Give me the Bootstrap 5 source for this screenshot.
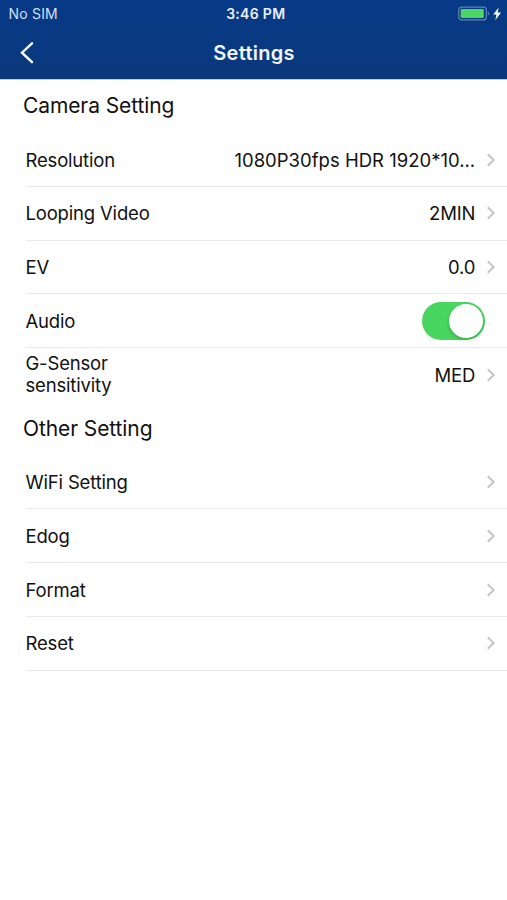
<!DOCTYPE html>
<html lang="en">
<head>
<meta charset="utf-8">
<meta name="viewport" content="width=device-width, initial-scale=1">
<title>Settings</title>
<link href="https://cdn.jsdelivr.net/npm/bootstrap@5.3.0/dist/css/bootstrap.min.css" rel="stylesheet">
<style>
body { font-family: Inter, "Liberation Sans", sans-serif; font-size: 18.5px; line-height: 22px; color: #111; background: #fff; letter-spacing: -.1px; }
.app-header { height: 79px; margin-bottom: .4px; background: linear-gradient(#063a87, #0a387b); box-shadow: 0 1px 0 #b9cfec; color: #fff; }
.status-bar { height: 27px; font-size: 14px; padding: 0 4px 0 8.5px; }
.status-side { flex: 1 1 0; }
.carrier { color: #d3dff3; letter-spacing: .2px; }
.clock { font-weight: 600; color: #e9f0fb; letter-spacing: .3px; }
.title-bar { height: 51px; padding: 0 19px 0 20px; }
.page-title { font-size: 20px; line-height: 24px; font-weight: 600; color: #f2f6fc; letter-spacing: .25px; }
.section-title { height: 53.75px; padding-left: 23px; font-size: 21px; line-height: 26px; font-weight: 400; }
.setting-row { height: 53.75px; margin-left: 25.5px; padding-right: 11px; border-bottom: 1px solid #e9e9eb; }
.setting-row.plain { border-bottom-color: transparent; }
.setting-label { width: 140px; letter-spacing: -.18px; }
.setting-label.narrow { width: 100px; padding-bottom: 1px; }
.setting-value { width: 243px; margin-right: -1.2px; letter-spacing: .01px; font-feature-settings: "calt" 0; }
.setting-value.tight { letter-spacing: -.2px; }
.toggle { width: 63px; height: 38px; padding: 2px; border-radius: 19px; background: #48d660; margin-right: 11px; }
.toggle-knob { width: 34px; height: 34px; border-radius: 50%; background: #fff; box-shadow: 0 2px 4px rgba(0,0,0,.2); }
</style>
</head>
<body>
<svg class="d-none"><symbol id="chevron" viewBox="0 0 10 14"><path d="M1.7 1.3 7.7 7l-6 5.7" fill="none" stroke="#c3c3c6" stroke-width="1.9"/></symbol></svg>
<header class="app-header">
  <div class="status-bar d-flex align-items-center">
    <span class="status-side carrier">No SIM</span>
    <span class="clock">3:46 PM</span>
    <span class="status-side d-flex justify-content-end">
      <svg width="45" height="16" viewBox="0 0 45 16"><rect x=".7" y="1.1" width="27.6" height="12.8" rx="3" fill="none" stroke="#5f84b8" stroke-width="1.2"/><rect x="2.6" y="3.1" width="23.2" height="8.8" rx="1.4" fill="#4bd763"/><path d="M29.8 5.5v4c1.7-.5 1.7-3.5 0-4Z" fill="#5f84b8"/><path d="M40.7 1.4 35.2 8.5h3.3l-1.2 5.7 5.7-7.6h-3.5Z" fill="#fff"/></svg>
    </span>
  </div>
  <div class="title-bar d-flex align-items-center">
    <span class="status-side d-flex"><svg width="16" height="24" viewBox="0 0 16 24"><path d="M12 2.3 2 11.7l10 9.5" fill="none" stroke="#fff" stroke-width="2.4" stroke-linecap="round" stroke-linejoin="miter"/></svg></span>
    <h1 class="page-title m-0">Settings</h1>
    <span class="status-side"></span>
  </div>
</header>
<main>
  <h2 class="section-title m-0 d-flex align-items-center">Camera Setting</h2>
  <div class="setting-row d-flex align-items-center justify-content-between"><span class="setting-label">Resolution</span><span class="d-flex align-items-center gap-2"><span class="setting-value text-end text-nowrap">1080P30fps HDR 1920*10...</span><svg width="10" height="14" class="ms-1"><use href="#chevron"/></svg></span></div>
  <div class="setting-row d-flex align-items-center justify-content-between"><span class="setting-label">Looping Video</span><span class="d-flex align-items-center gap-2"><span class="setting-value tight text-end">2MIN</span><svg width="10" height="14" class="ms-1"><use href="#chevron"/></svg></span></div>
  <div class="setting-row d-flex align-items-center justify-content-between"><span class="setting-label">EV</span><span class="d-flex align-items-center gap-2"><span class="setting-value tight text-end">0.0</span><svg width="10" height="14" class="ms-1"><use href="#chevron"/></svg></span></div>
  <div class="setting-row d-flex align-items-center justify-content-between"><span class="setting-label">Audio</span><span class="toggle d-flex justify-content-end align-items-center" role="switch" aria-checked="true" aria-label="Audio"><span class="toggle-knob"></span></span></div>
  <div class="setting-row plain d-flex align-items-center justify-content-between"><span class="setting-label narrow">G-Sensor sensitivity</span><span class="d-flex align-items-center gap-2"><span class="setting-value tight text-end">MED</span><svg width="10" height="14" class="ms-1"><use href="#chevron"/></svg></span></div>
  <h2 class="section-title m-0 d-flex align-items-center">Other Setting</h2>
  <div class="setting-row d-flex align-items-center justify-content-between"><span class="setting-label">WiFi Setting</span><svg width="10" height="14"><use href="#chevron"/></svg></div>
  <div class="setting-row d-flex align-items-center justify-content-between"><span class="setting-label">Edog</span><svg width="10" height="14"><use href="#chevron"/></svg></div>
  <div class="setting-row d-flex align-items-center justify-content-between"><span class="setting-label">Format</span><svg width="10" height="14"><use href="#chevron"/></svg></div>
  <div class="setting-row d-flex align-items-center justify-content-between"><span class="setting-label">Reset</span><svg width="10" height="14"><use href="#chevron"/></svg></div>
</main>
<script src="https://cdn.jsdelivr.net/npm/bootstrap@5.3.0/dist/js/bootstrap.bundle.min.js"></script>
</body>
</html>
